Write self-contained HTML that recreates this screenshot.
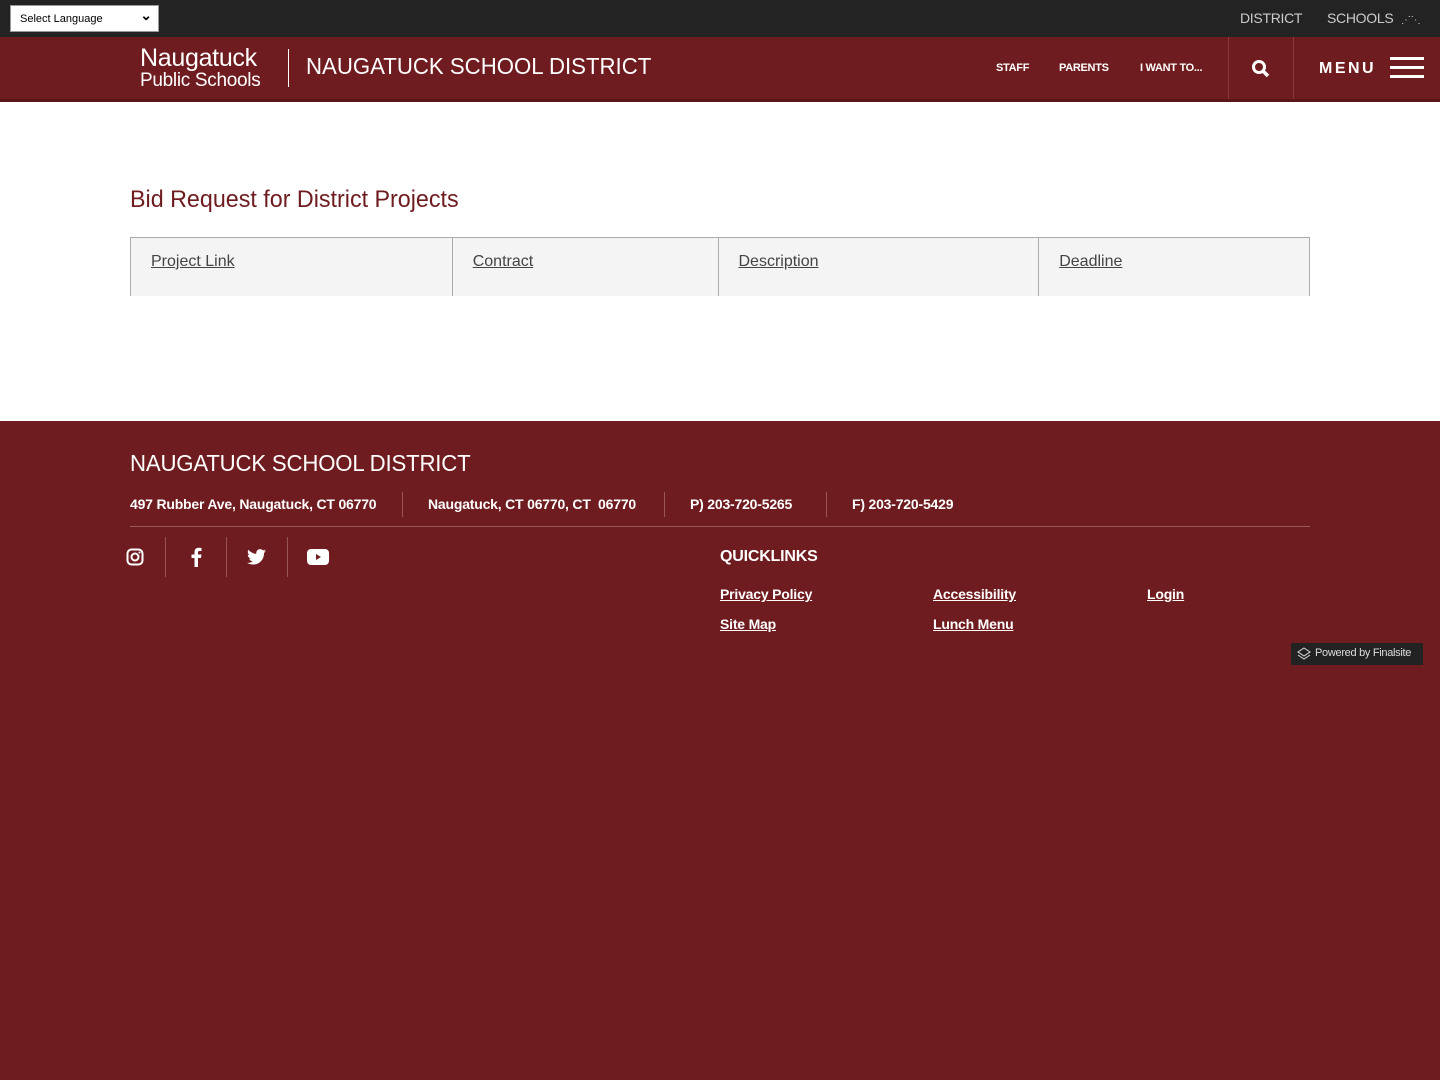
<!DOCTYPE html>
<html><head><meta charset="utf-8"><style>
*{box-sizing:border-box;margin:0;padding:0}
body{width:1440px;height:1080px;background:#6e1c1f;font-family:"Liberation Sans",sans-serif;position:relative;overflow:hidden}
.top{position:absolute;top:0;left:0;width:1440px;height:37px;background:#232323}
.sel{position:absolute;left:10px;top:5px;width:149px;height:27px;background:#fff;border:1px solid #999;font-size:11px;padding:7px 9px;color:#000}
.sel:after{content:"⌄";position:absolute;right:6px;top:1px;font-size:14px;font-weight:bold}
.tl{position:absolute;top:10px;color:#ccc;font-size:14px;letter-spacing:-0.3px}
.hdr{position:absolute;top:37px;left:0;width:1440px;height:65px;background:#6e1c1f;border-bottom:3px solid #5a1518}
.w{color:#fff;position:absolute;white-space:nowrap}
.main{position:absolute;top:102px;left:0;width:1440px;height:319px;background:#fff}
h1{position:absolute;left:130px;top:84px;color:#6e1c1f;font-size:24px;font-weight:normal;transform:scaleX(0.97);transform-origin:left;white-space:nowrap}
.tbl{position:absolute;left:130px;top:135px;width:1180px;height:59px;background:#f4f4f4;border:1px solid #aaa;border-bottom:none;display:flex}
.tbl div{border-right:1px solid #aaa;padding:15px 20px;font-size:16px;color:#444;text-decoration:underline}
.f{color:#fff;position:absolute;font-size:14px;white-space:nowrap;font-weight:bold;letter-spacing:-0.2px}
.sep{position:absolute;width:1px;background:#9a5557}
a{color:#fff;text-decoration:underline}
</style></head><body>
<div class="top">
<div class="sel">Select Language</div>
<div class="tl" style="left:1240px">DISTRICT</div>
<div class="tl" style="left:1327px">SCHOOLS <span style="font-size:10px;margin-left:4px">⋰⋱</span></div>
</div>
<div class="hdr">
<div class="w" style="left:140px;top:11px;font-size:25px;line-height:20px;letter-spacing:-0.3px">Naugatuck<br><span style="font-size:19px">Public Schools</span></div>
<div style="position:absolute;left:288px;top:12px;width:1px;height:38px;background:#fff"></div>
<div class="w" style="left:306px;top:16px;font-size:23px;transform:scaleX(0.965);transform-origin:left">NAUGATUCK SCHOOL DISTRICT</div>
<div class="w" style="left:996px;top:25px;font-size:11px;font-weight:bold;letter-spacing:-0.3px">STAFF</div>
<div class="w" style="left:1059px;top:25px;font-size:11px;font-weight:bold;letter-spacing:-0.3px">PARENTS</div>
<div class="w" style="left:1140px;top:25px;font-size:11px;font-weight:bold;letter-spacing:-0.3px">I WANT TO...</div>
<div style="position:absolute;left:1228px;top:0;width:1px;height:62px;background:#8a3a3c"></div>
<div style="position:absolute;left:1293px;top:0;width:1px;height:62px;background:#8a3a3c"></div>
<svg style="position:absolute;left:1251px;top:22px" width="20" height="20" viewBox="0 0 20 20"><circle cx="8" cy="8" r="5.5" stroke="#fff" stroke-width="3" fill="none"/><path d="M12 12l5 5" stroke="#fff" stroke-width="3.5"/></svg>
<div class="w" style="left:1319px;top:23px;font-size:16px;font-weight:bold;letter-spacing:2.5px">MENU</div>
<div style="position:absolute;left:1390px;top:20px;width:34px;height:3px;background:#fff;box-shadow:0 9px 0 #fff,0 18px 0 #fff"></div>
</div>
<div class="main">
<h1>Bid Request for District Projects</h1>
<div class="tbl"><div style="width:322px">Project Link</div><div style="width:266px">Contract</div><div style="width:321px">Description</div><div style="width:270px;border:none">Deadline</div></div>
</div>
<div class="f" style="left:130px;top:450px;font-size:23px;font-weight:normal;transform:scaleX(0.965);transform-origin:left">NAUGATUCK SCHOOL DISTRICT</div>
<div class="f" style="left:130px;top:496px">497 Rubber Ave, Naugatuck, CT 06770</div>
<div class="f" style="left:428px;top:496px">Naugatuck, CT 06770, CT &nbsp;06770</div>
<div class="f" style="left:690px;top:496px">P) 203-720-5265</div>
<div class="f" style="left:852px;top:496px">F) 203-720-5429</div>
<div class="sep" style="left:402px;top:492px;height:25px"></div>
<div class="sep" style="left:664px;top:492px;height:25px"></div>
<div class="sep" style="left:826px;top:492px;height:25px"></div>
<div style="position:absolute;left:130px;top:526px;width:1180px;height:1px;background:#9a5557"></div>
<div class="sep" style="left:165px;top:537px;height:40px"></div>
<div class="sep" style="left:226px;top:537px;height:40px"></div>
<div class="sep" style="left:287px;top:537px;height:40px"></div>
<svg style="position:absolute;left:126px;top:548px" width="18" height="18" viewBox="0 0 18 18"><rect x="1.5" y="1.5" width="15" height="15" rx="4" stroke="#fff" stroke-width="2" fill="none"/><circle cx="9" cy="9" r="3.5" stroke="#fff" stroke-width="2" fill="none"/><circle cx="13.5" cy="4.5" r="1" fill="#fff"/></svg>
<svg style="position:absolute;left:190px;top:547px" width="12" height="20" viewBox="0 0 12 20"><path d="M8 20V11h3l.5-3.5H8V5.5C8 4.5 8.3 4 9.7 4H11.5V1C11 .9 10 .8 8.8.8 6.2.8 4.5 2.3 4.5 5.2v2.3H1.5V11h3v9z" fill="#fff"/></svg>
<svg style="position:absolute;left:247px;top:549px" width="19" height="16" viewBox="0 0 24 20"><path d="M24 2.4c-.9.4-1.8.6-2.8.8 1-.6 1.8-1.6 2.2-2.7-1 .6-2 1-3.1 1.2C19.3.7 18 0 16.6 0c-2.7 0-4.9 2.2-4.9 4.9 0 .4 0 .8.1 1.1C7.7 5.8 4.1 3.9 1.7.9c-.4.7-.7 1.6-.7 2.5 0 1.7.9 3.2 2.2 4.1-.8 0-1.6-.2-2.2-.6v.1c0 2.4 1.7 4.4 3.9 4.8-.4.1-.8.2-1.3.2-.3 0-.6 0-.9-.1.6 2 2.4 3.4 4.6 3.4-1.7 1.3-3.8 2.1-6.1 2.1-.4 0-.8 0-1.2-.1 2.2 1.4 4.8 2.2 7.5 2.2 9.1 0 14-7.5 14-14v-.6c1-.7 1.8-1.6 2.5-2.5z" fill="#fff"/></svg>
<svg style="position:absolute;left:307px;top:549px" width="22" height="16" viewBox="0 0 22 16"><rect width="22" height="16" rx="4" fill="#fff"/><path d="M9 5l5 3-5 3z" fill="#6e1c1f"/></svg>
<div class="f" style="left:720px;top:548px;font-size:16px">QUICKLINKS</div>
<div class="f" style="left:720px;top:586px"><a>Privacy Policy</a></div>
<div class="f" style="left:933px;top:586px"><a>Accessibility</a></div>
<div class="f" style="left:1147px;top:586px"><a>Login</a></div>
<div class="f" style="left:720px;top:616px"><a>Site Map</a></div>
<div class="f" style="left:933px;top:616px"><a>Lunch Menu</a></div>
<div style="position:absolute;left:1291px;top:643px;width:132px;height:22px;background:#222;color:#ddd;font-size:11px;padding:4px 0 0 24px;white-space:nowrap;letter-spacing:-0.3px">Powered by Finalsite</div>
<svg style="position:absolute;left:1297px;top:647px" width="14" height="14" viewBox="0 0 14 14"><path d="M7 1l6 4-6 4-6-4zM1 8l6 4 6-4" stroke="#ddd" fill="none"/></svg>
</body></html>
